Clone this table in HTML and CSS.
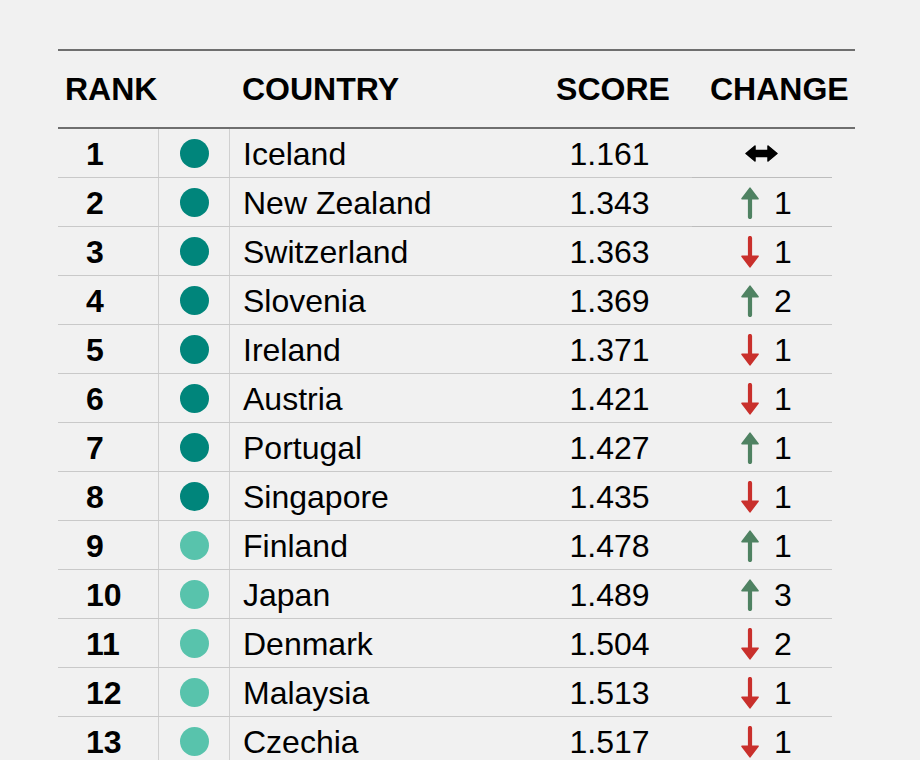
FILE: index.html
```html
<!DOCTYPE html>
<html lang="en">
<head>
<meta charset="utf-8">
<title>Global Peace Index ranking</title>
<link rel="stylesheet" href="styles.css">
</head>
<body>
<svg width="0" height="0" class="defs" aria-hidden="true">
  <defs>
    <symbol id="up" viewBox="0 0 18 32">
      <line x1="9" y1="30" x2="9" y2="10" stroke="currentColor" stroke-width="4.2" stroke-linecap="round"/>
      <polygon points="9,1.2 17,11.8 1,11.8" fill="currentColor" stroke="currentColor" stroke-width="1.6" stroke-linejoin="round"/>
    </symbol>
    <symbol id="down" viewBox="0 0 18 32">
      <line x1="9" y1="2" x2="9" y2="22" stroke="currentColor" stroke-width="4.2" stroke-linecap="round"/>
      <polygon points="9,30.8 17,20.2 1,20.2" fill="currentColor" stroke="currentColor" stroke-width="1.6" stroke-linejoin="round"/>
    </symbol>
    <symbol id="both" viewBox="0 0 33 17">
      <polygon points="1,8.5 10,1 10,5.5 23,5.5 23,1 32,8.5 23,16 23,11.5 10,11.5 10,16" fill="currentColor" stroke="currentColor" stroke-width="1.5" stroke-linejoin="round"/>
    </symbol>
  </defs>
</svg>
<div class="table">
  <div class="head">
    <div class="h-rank">RANK</div>
    <div class="h-dot"></div>
    <div class="h-country">COUNTRY</div>
    <div class="h-score">SCORE</div>
    <div class="h-change">CHANGE</div>
  </div>
  <div class="rows">
    <div class="row"><div class="rank">1</div><div class="dotc"><span class="dot dark"></span></div><div class="country">Iceland</div><div class="score">1.161</div><div class="chg same"><svg class="both"><use href="#both"/></svg></div></div>
    <div class="row"><div class="rank">2</div><div class="dotc"><span class="dot dark"></span></div><div class="country">New Zealand</div><div class="score">1.343</div><div class="chg hl"><svg class="arr up"><use href="#up"/></svg><span class="num">1</span></div></div>
    <div class="row"><div class="rank">3</div><div class="dotc"><span class="dot dark"></span></div><div class="country">Switzerland</div><div class="score">1.363</div><div class="chg"><svg class="arr down"><use href="#down"/></svg><span class="num">1</span></div></div>
    <div class="row"><div class="rank">4</div><div class="dotc"><span class="dot dark"></span></div><div class="country">Slovenia</div><div class="score">1.369</div><div class="chg"><svg class="arr up"><use href="#up"/></svg><span class="num">2</span></div></div>
    <div class="row"><div class="rank">5</div><div class="dotc"><span class="dot dark"></span></div><div class="country">Ireland</div><div class="score">1.371</div><div class="chg"><svg class="arr down"><use href="#down"/></svg><span class="num">1</span></div></div>
    <div class="row"><div class="rank">6</div><div class="dotc"><span class="dot dark"></span></div><div class="country">Austria</div><div class="score">1.421</div><div class="chg"><svg class="arr down"><use href="#down"/></svg><span class="num">1</span></div></div>
    <div class="row"><div class="rank">7</div><div class="dotc"><span class="dot dark"></span></div><div class="country">Portugal</div><div class="score">1.427</div><div class="chg"><svg class="arr up"><use href="#up"/></svg><span class="num">1</span></div></div>
    <div class="row"><div class="rank">8</div><div class="dotc"><span class="dot dark"></span></div><div class="country">Singapore</div><div class="score">1.435</div><div class="chg"><svg class="arr down"><use href="#down"/></svg><span class="num">1</span></div></div>
    <div class="row"><div class="rank">9</div><div class="dotc"><span class="dot light"></span></div><div class="country">Finland</div><div class="score">1.478</div><div class="chg"><svg class="arr up"><use href="#up"/></svg><span class="num">1</span></div></div>
    <div class="row"><div class="rank">10</div><div class="dotc"><span class="dot light"></span></div><div class="country">Japan</div><div class="score">1.489</div><div class="chg"><svg class="arr up"><use href="#up"/></svg><span class="num">3</span></div></div>
    <div class="row"><div class="rank">11</div><div class="dotc"><span class="dot light"></span></div><div class="country">Denmark</div><div class="score">1.504</div><div class="chg"><svg class="arr down"><use href="#down"/></svg><span class="num">2</span></div></div>
    <div class="row"><div class="rank">12</div><div class="dotc"><span class="dot light"></span></div><div class="country">Malaysia</div><div class="score">1.513</div><div class="chg"><svg class="arr down"><use href="#down"/></svg><span class="num">1</span></div></div>
    <div class="row"><div class="rank">13</div><div class="dotc"><span class="dot light"></span></div><div class="country">Czechia</div><div class="score">1.517</div><div class="chg"><svg class="arr down"><use href="#down"/></svg><span class="num">1</span></div></div>
  </div>
</div>
</body>
</html>
```

FILE: styles.css
```css
html, body {
  margin: 0;
  padding: 0;
  background: #f1f1f1;
  overflow: hidden;
}

body {
  font-family: "Liberation Sans", Arial, Helvetica, sans-serif;
  color: #000;
}

.defs {
  position: absolute;
  width: 0;
  height: 0;
  overflow: hidden;
}

.table {
  margin: 49px 0 0 58px;
  width: 797px;
}

.head {
  display: grid;
  grid-template-columns: 100px 71px 312px 151px 163px;
  height: 76px;
  align-items: center;
  border-top: 2px solid #6f6f6f;
  border-bottom: 2px solid #6f6f6f;
  font-size: 32px;
  font-weight: 700;
  line-height: 1;
}

.h-rank { padding-left: 7px; }
.h-country { padding-left: 13px; }
.h-score { text-align: center; padding-right: 7px; }
.h-change { padding-left: 18px; }

.rows {
  width: 774px;
}

.row {
  display: grid;
  grid-template-columns: 100px 71px 312px 151px 140px;
  height: 48px;
  border-bottom: 1px solid #c9c9c9;
  font-size: 32px;
  line-height: 1;
}

.row > div {
  display: flex;
  align-items: center;
  padding-top: 1px;
}

.rank {
  font-weight: 700;
  padding-left: 28px;
}

.dotc {
  border-left: 1px solid #d0d0d0;
  justify-content: center;
}

.dot {
  width: 29px;
  height: 29px;
  border-radius: 50%;
  display: block;
}

.dot.dark { background: #00857b; }
.dot.light { background: #58c3ac; }

.country {
  border-left: 1px solid #d0d0d0;
  padding-left: 13px;
}

.score {
  justify-content: center;
  padding-right: 14px;
}

.chg {
  padding-left: 49px;
  gap: 15px;
}

.chg.same {
  padding-left: 53px;
}

.chg.hl {
  box-shadow: 0 -1px 0 #bdbdbd, 0 1px 0 #bdbdbd;
}

.arr {
  width: 18px;
  height: 32px;
  flex: none;
}

.arr.up { color: #4f8262; }
.arr.down { color: #c9302c; }

.both {
  width: 33px;
  height: 17px;
  color: #000;
}

.num {
  display: block;
}
```
